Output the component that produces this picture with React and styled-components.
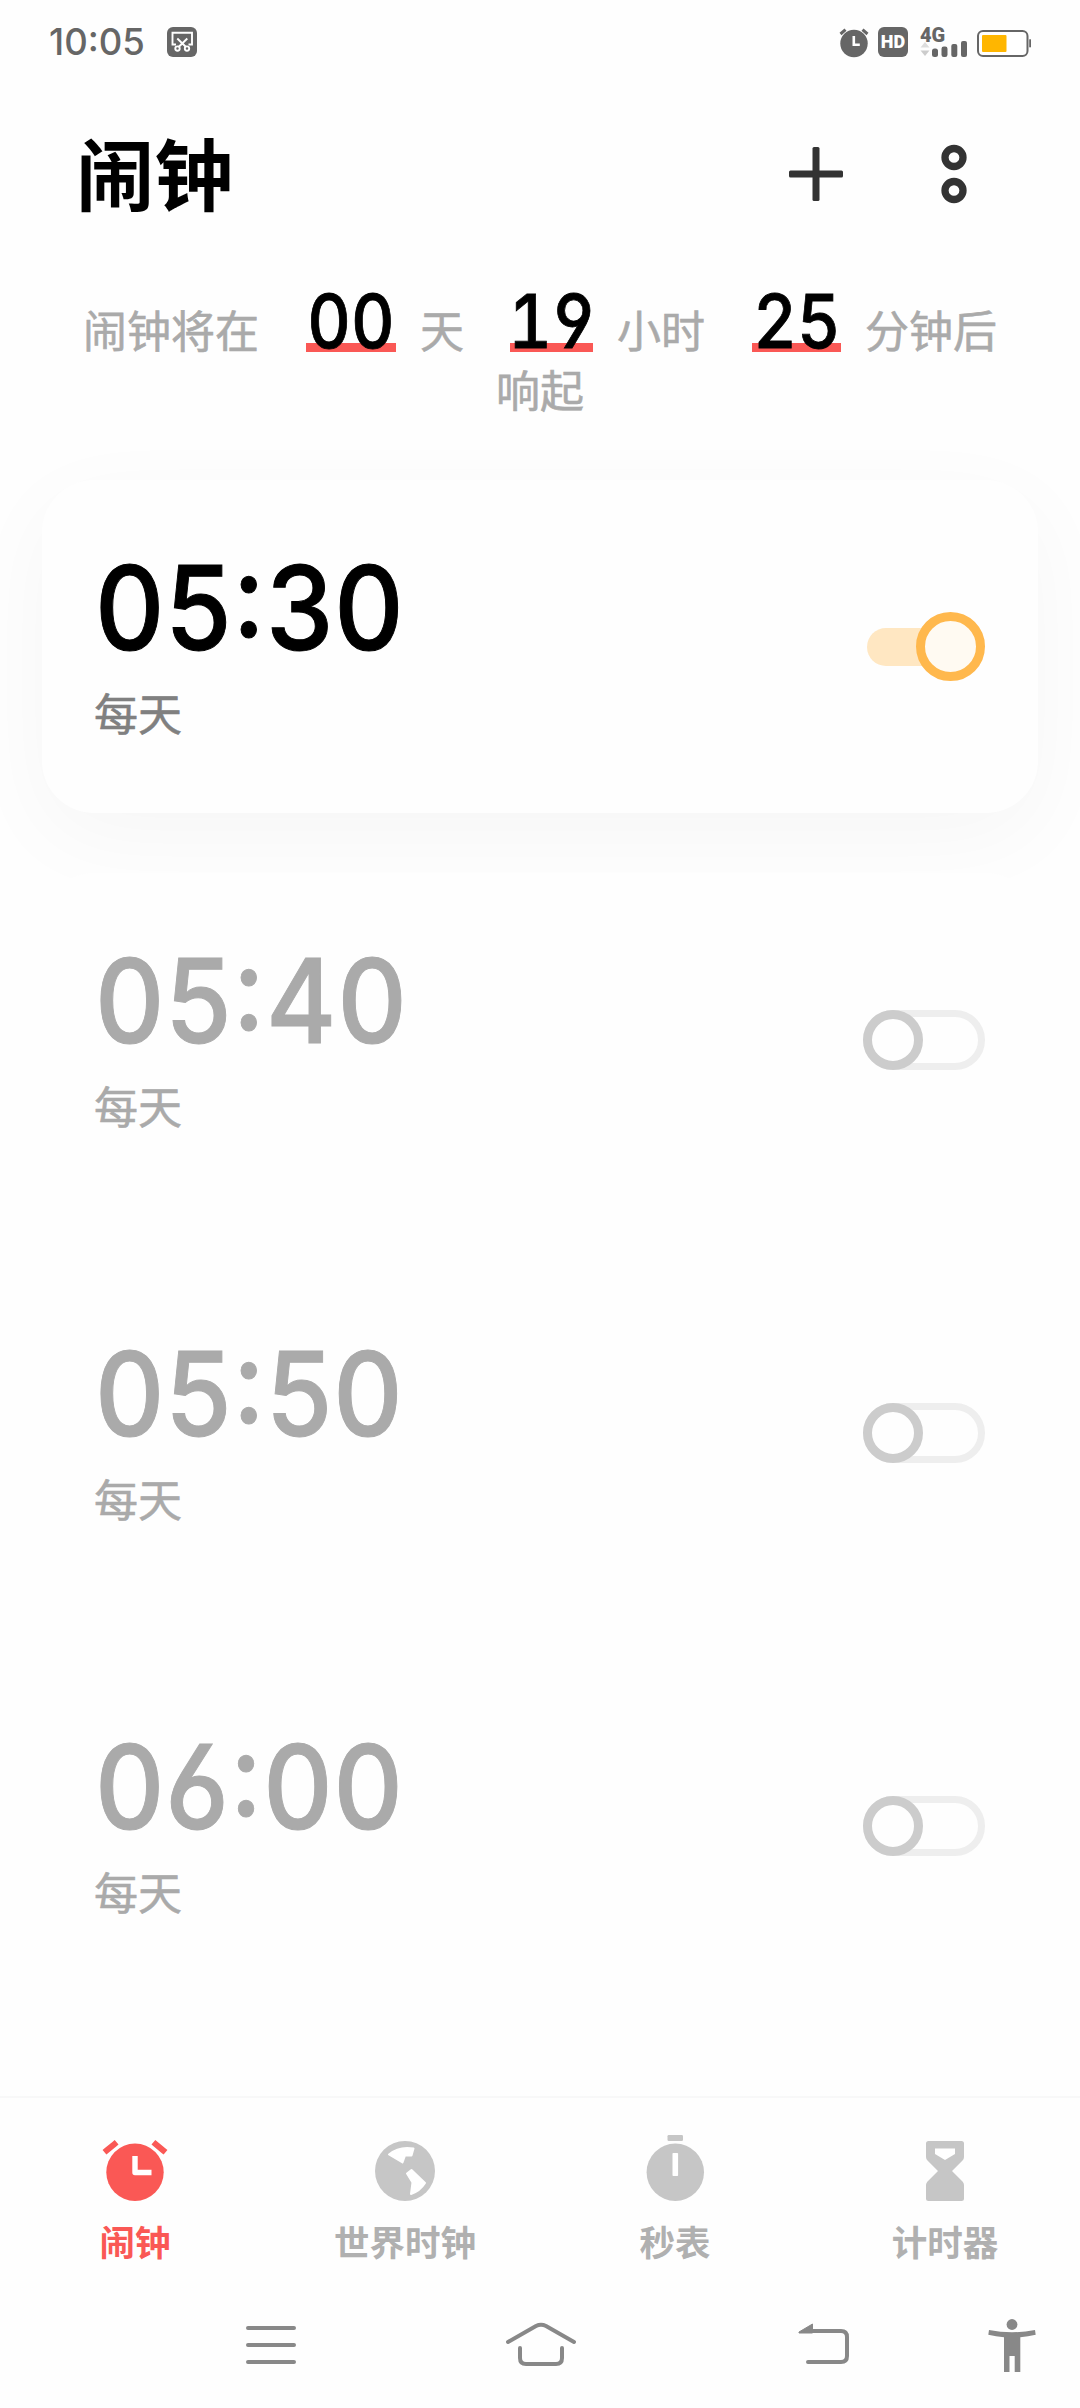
import React from "react";
import styled, { createGlobalStyle, css } from "styled-components";

const GlobalStyle = createGlobalStyle`
  * {
    box-sizing: border-box;
  }

  body {
    margin: 0;
    background: #fefefe;
    font-family: "Inter", "Noto Sans CJK SC", sans-serif;
  }

  svg {
    display: block;
    flex-shrink: 0;
    overflow: visible;
  }
`;

const numerals = css`
  font-family: "Inter", sans-serif;
  font-feature-settings: "cv03" 1, "cv04" 1, "calt" 1;
`;

const alarms = [
  { time: "05:30", repeat: "每天", on: true },
  { time: "05:40", repeat: "每天", on: false },
  { time: "05:50", repeat: "每天", on: false },
  { time: "06:00", repeat: "每天", on: false },
];

function AlarmClockIcon() {
  return (
    <svg width="66" height="66" viewBox="0 0 66 66">
      <circle cx="33" cy="37.3" r="28.7" fill="#fa5855" />
      <path d="M33 21V37.500H49.500" fill="none" stroke="#fff" strokeWidth="5.4" strokeLinejoin="round" />
      <path
        d="M4.800 15.400L12.300 9.200M61.200 15.400L53.700 9.200"
        stroke="#fa5855"
        strokeWidth="6"
        strokeLinecap="square"
      />
    </svg>
  );
}

function GlobeIcon() {
  return (
    <svg width="66" height="66" viewBox="0 0 66 66">
      <circle cx="33" cy="36" r="30" fill="#c6c6c6" />
      <g fill="#fff" stroke="#fff" strokeWidth="2" strokeLinejoin="round">
        <path d="M17 19.500Q27 11 41.500 13.500L39.500 20.500H33L30.500 27.500Z" />
        <path d="M35 38.500L39.500 35L53 48Q48 56 39 59L40.500 47.500Z" />
      </g>
    </svg>
  );
}

function StopwatchIcon() {
  return (
    <svg width="66" height="66" viewBox="0 0 66 66">
      <rect x="25.5" y="0" width="15.5" height="6" rx="1.2" fill="#c6c6c6" />
      <circle cx="33.3" cy="37.3" r="28.7" fill="#c6c6c6" />
      <rect x="30.5" y="18" width="5.6" height="23" rx="0.8" fill="#fff" />
    </svg>
  );
}

function HourglassIcon() {
  return (
    <svg width="66" height="66" viewBox="0 0 66 66">
      <path
        d="M16.5 6H49.5Q52 6 52 8.500V22Q52 24 50.500 25.500L40 36L50.500 46.500Q52 48 52 50V63.500Q52 66 49.500 66H16.500Q14 66 14 63.500V50Q14 48 15.500 46.500L26 36L15.500 25.500Q14 24 14 22V8.500Q14 6 16.500 6Z"
        fill="#c6c6c6"
      />
      <path d="M23 13.500H43V19L33 25L23 19Z" fill="#fff" />
    </svg>
  );
}

const tabs = [
  { label: "闹钟", Icon: AlarmClockIcon, active: true },
  { label: "世界时钟", Icon: GlobeIcon },
  { label: "秒表", Icon: StopwatchIcon },
  { label: "计时器", Icon: HourglassIcon },
];

function StatusBar() {
  return (
    <StatusRow>
      <StatusTime>10:05</StatusTime>
      <svg width="30" height="30" viewBox="0 0 30 30">
        <rect width="30" height="30" rx="6" fill="#666" />
        <g fill="none" stroke="#fff" strokeWidth="1.9">
          <path d="M9 17.500H5.500V5.700H25V17.500H21.500" />
          <path d="M10.300 11.500L19 20M20.300 11.500L11.600 20" />
          <circle cx="10.500" cy="21.600" r="2.200" />
          <circle cx="20" cy="21.600" r="2.200" />
        </g>
      </svg>
      <StatusIcons>
        <svg width="30" height="30" viewBox="0 0 30 30">
          <circle cx="15" cy="16.500" r="13.700" fill="#666" />
          <path d="M14.800 9V17.800H20.800" fill="none" stroke="#fff" strokeWidth="2.600" />
          <path d="M1.500 7L6.500 2.600M28.500 7L23.500 2.600" stroke="#666" strokeWidth="3" />
        </svg>
        <HdBadge>HD</HdBadge>
        <Signal>
          <Network>4G</Network>
          <svg width="48" height="16" viewBox="0 0 48 16">
            <path d="M0.500 6.500H9.500L5 1Z" fill="#ddd" />
            <path d="M0.500 9.500H9.500L5 15Z" fill="#ccc" />
            <g fill="#666">
              <rect x="12" y="7.500" width="6" height="8.500" rx="2.500" />
              <rect x="21.500" y="5.500" width="6" height="10.500" rx="2.300" />
              <rect x="31.300" y="3" width="6" height="13" rx="2" />
              <rect x="41" y="0" width="6" height="16" rx="2" />
            </g>
          </svg>
        </Signal>
        <svg width="55" height="30" viewBox="0 0 55 30">
          <rect x="1" y="4" width="49.500" height="25" rx="5" fill="#fff" stroke="#666" strokeWidth="2" />
          <rect x="5" y="8" width="24.500" height="17" rx="1" fill="#ffb600" />
          <rect x="52.200" y="12.300" width="1.800" height="8" fill="#666" />
        </svg>
      </StatusIcons>
    </StatusRow>
  );
}

function Count({ value, ...rest }) {
  return (
    <CountNumber {...rest}>
      <CountDigits>{value}</CountDigits>
    </CountNumber>
  );
}

function AlarmItem({ time, repeat, on }) {
  return (
    <AlarmCard $on={on}>
      <AlarmText>
        <AlarmTime $on={on}>{time}</AlarmTime>
        <AlarmRepeat $on={on}>{repeat}</AlarmRepeat>
      </AlarmText>
      <Toggle $on={on} role="switch" aria-checked={on}>
        <ToggleKnob $on={on} />
      </Toggle>
    </AlarmCard>
  );
}

function App() {
  return (
    <Screen>
      <GlobalStyle />
      <StatusBar />
      <Header>
        <Title>闹钟</Title>
        <svg width="54" height="54" viewBox="0 0 54 54">
          <rect x="0" y="23.500" width="54" height="7" rx="1.500" fill="#333" />
          <rect x="23.500" y="0" width="7" height="54" rx="1.500" fill="#333" />
        </svg>
        <svg width="26" height="60" viewBox="0 0 26 60">
          <circle cx="13" cy="13.500" r="9" fill="none" stroke="#333" strokeWidth="7.300" />
          <circle cx="13" cy="46.500" r="9" fill="none" stroke="#333" strokeWidth="7.300" />
        </svg>
      </Header>
      <Countdown>
        <CountdownLine>
          <span>闹钟将在</span>
          <Count value="00" $before={47} $width={90} />
          <span>天</span>
          <Count value="19" $before={46} $width={83} />
          <span>小时</span>
          <Count value="25" $before={47} $width={89} />
          <span>分钟后</span>
        </CountdownLine>
        <CountdownLine>响起</CountdownLine>
      </Countdown>
      <AlarmList>
        {alarms.map((alarm) => (
          <AlarmItem key={alarm.time} {...alarm} />
        ))}
      </AlarmList>
      <TabBar>
        {tabs.map(({ label, Icon, active }) => (
          <Tab key={label} $active={active}>
            <Icon />
            <TabLabel>{label}</TabLabel>
          </Tab>
        ))}
      </TabBar>
      <SystemNav>
        <NavButton $before={246}>
          <svg width="50" height="60" viewBox="0 0 50 60">
            <path d="M2 13H48M2 30H48M2 47H48" stroke="#888" strokeWidth="4" strokeLinecap="round" />
          </svg>
        </NavButton>
        <NavButton $before={210}>
          <svg width="70" height="60" viewBox="0 0 70 60">
            <g fill="none" stroke="#888" strokeWidth="4" strokeLinecap="round" strokeLinejoin="round">
              <path d="M2 27L30 11Q35 8.500 40 11L68 27" />
              <path d="M14 33V43Q14 49 20 49H50Q56 49 56 43V33" />
            </g>
          </svg>
        </NavButton>
        <NavButton $before={222}>
          <svg width="52" height="60" viewBox="0 0 52 60">
            <path
              d="M12 16H43Q49 16 49 22V41Q49 47 43 47H10"
              fill="none"
              stroke="#888"
              strokeWidth="4"
              strokeLinecap="round"
            />
            <path d="M1 17L14.500 9V18H1Z" fill="#888" stroke="#888" strokeLinejoin="round" />
          </svg>
        </NavButton>
        <NavButton $before={138}>
          <svg width="48" height="60" viewBox="0 0 48 60">
            <circle cx="24" cy="9.500" r="5.400" fill="#888" />
            <path
              d="M1 15Q24 19.500 47 15L47.700 19.700Q40 21.500 32.300 22.300V57H26.700V41H21.500V57H16V22.300Q8 21.500 0.300 19.700Z"
              fill="#888"
            />
          </svg>
        </NavButton>
      </SystemNav>
    </Screen>
  );
}

const Screen = styled.div`
  width: 1080px;
  height: 2408px;
  display: flex;
  flex-direction: column;
  overflow: hidden;
  background: #fefefe;
`;

const StatusRow = styled.div`
  height: 84px;
  padding: 0 48px 0 49px;
  display: flex;
  align-items: center;
`;

const StatusTime = styled.div`
  ${numerals}
  width: 118px;
  font-size: 36.5px;
  font-weight: 450;
  line-height: 44px;
  color: #666;
`;

const StatusIcons = styled.div`
  flex: 1;
  display: flex;
  align-items: center;
  justify-content: flex-end;
  gap: 9px;
`;

const HdBadge = styled.div`
  width: 30px;
  height: 30px;
  margin-right: 3px;
  border-radius: 6px;
  background: #666;
  color: #fff;
  font: 900 18px/30px "Roboto", sans-serif;
  text-align: center;
`;

const Signal = styled.div`
  width: 48px;
  height: 36px;
  padding-bottom: 3px;
  display: flex;
  flex-direction: column;
  justify-content: flex-end;
`;

const Network = styled.div`
  height: 22px;
  margin-bottom: -5px;
  font: 900 20px/22px "Roboto", sans-serif;
  color: #666;
`;

const Header = styled.header`
  height: 180px;
  padding: 0 113px 0 76px;
  display: flex;
  align-items: center;
  gap: 98px;
`;

const Title = styled.h1`
  flex: 1;
  margin: 0 0 6px;
  font: 700 78.5px/100px "Noto Sans CJK SC", sans-serif;
  color: #000;
`;

const Countdown = styled.div`
  height: 216px;
  padding-top: 20px;
  display: flex;
  flex-direction: column;
  align-items: center;
  font-family: "Noto Sans CJK SC", sans-serif;
  font-size: 44px;
  color: #aaa;
  -webkit-text-stroke: 0.6px currentColor;
`;

const CountdownLine = styled.div`
  display: flex;
  align-items: baseline;
  height: 68px;
  line-height: 74px;
  white-space: nowrap;
`;

const CountNumber = styled.span`
  width: ${(props) => props.$width}px;
  margin-left: ${(props) => props.$before}px;
  margin-right: 24px;
  display: flex;
  justify-content: center;
  line-height: 74px;
  color: #000;
  background: linear-gradient(#fa5855, #fa5855) 0 calc(100% - 6px) / 100% 9px no-repeat;
`;

const CountDigits = styled.span`
  ${numerals}
  font-size: 74px;
  font-weight: 500;
  font-variant-numeric: tabular-nums;
  transform: scaleX(0.91);
  -webkit-text-stroke: 0.8px #000;
`;

const AlarmList = styled.div`
  flex: 1;
  display: flex;
  flex-direction: column;
  gap: 60px;
  padding: 0 42px;
`;

const AlarmCard = styled.div`
  height: 333px;
  padding: 0 53px 0 52px;
  display: flex;
  align-items: center;
  justify-content: space-between;
  border-radius: 52px;
  box-shadow: ${(props) => (props.$on ? "0 24px 90px rgba(0, 0, 0, 0.035)" : "none")};
  background: #fefefe;
`;

const AlarmText = styled.div`
  display: flex;
  flex-direction: column;
  padding-bottom: 6px;
`;

const AlarmTime = styled.div`
  ${numerals}
  margin-left: 1px;
  font-size: 117px;
  font-weight: 500;
  line-height: 118px;
  letter-spacing: 1px;
  transform: scaleX(0.918);
  transform-origin: 0 50%;
  color: ${(props) => (props.$on ? "#000" : "#aaa")};
  -webkit-text-stroke: 1px currentColor;
`;

const AlarmRepeat = styled.div`
  margin-top: 18px;
  font: 400 44px/54px "Noto Sans CJK SC", sans-serif;
  color: ${(props) => (props.$on ? "#808080" : "#aaa")};
  -webkit-text-stroke: 0.6px currentColor;
`;

const Toggle = styled.div`
  display: flex;
  align-items: center;
  flex-shrink: 0;

  ${(props) =>
    props.$on
      ? css`
          width: 101px;
          height: 38px;
          margin-right: 17px;
          border-radius: 19px;
          background: #ffe7c2;
        `
      : css`
          width: 122px;
          height: 60px;
          border: 7px solid #eee;
          border-radius: 30px;
        `}
`;

const ToggleKnob = styled.div`
  flex-shrink: 0;
  border-style: solid;
  border-width: 9px;
  border-radius: 50%;

  ${(props) =>
    props.$on
      ? css`
          width: 69px;
          height: 69px;
          margin-left: 49px;
          border-color: #ffb84d;
          background: #fffaf2;
        `
      : css`
          width: 60px;
          height: 60px;
          margin-left: -7px;
          border-color: #ccc;
          background: #fefefe;
        `}
`;

const TabBar = styled.nav`
  height: 204px;
  display: flex;
  border-top: 2px solid #f8f8f8;
`;

const Tab = styled.div`
  flex: 1;
  display: flex;
  flex-direction: column;
  align-items: center;
  padding-top: 37px;
  color: ${(props) => (props.$active ? "#fa5855" : "#b0b0b0")};
`;

const TabLabel = styled.div`
  margin-top: 13px;
  font: 700 35.5px/54px "Noto Sans CJK SC", sans-serif;
`;

const SystemNav = styled.div`
  height: 108px;
  padding-top: 15px;
  display: flex;
  align-items: flex-start;
`;

const NavButton = styled.div`
  margin-left: ${(props) => props.$before}px;
`;

export default App;
